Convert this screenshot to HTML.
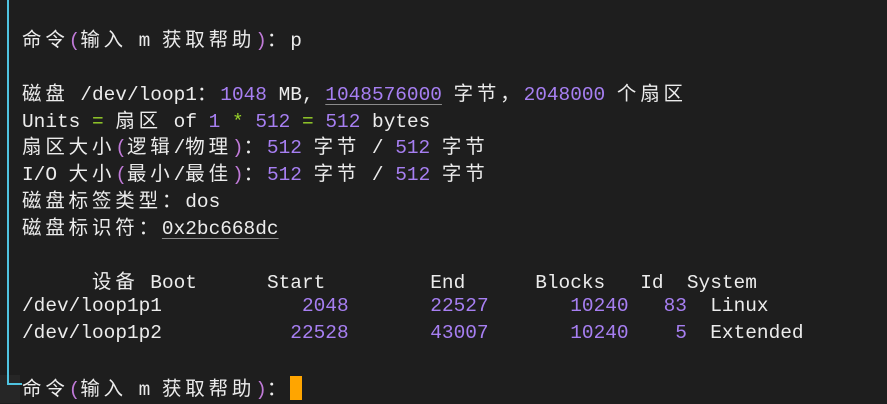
<!DOCTYPE html>
<html><head><meta charset="utf-8"><style>
html,body{margin:0;padding:0;background:#1e1e1e;width:887px;height:403px;overflow:hidden}
#t{position:absolute;left:22px;top:25px;font-family:"Liberation Mono","Noto Sans CJK SC",monospace;font-size:19.45px;line-height:26.85px;color:#ececec;white-space:pre}
.c{letter-spacing:3.88px;font-family:"Noto Sans CJK SC","WenQuanYi Zen Hei",sans-serif}
.n{color:#a77ff2}
.g{color:#9ad52a}
.p{color:#c07ad8}
.u{text-decoration:underline;text-decoration-color:#8a8a8a;text-underline-offset:4px}
.l{height:26.85px}
#br{position:absolute;left:7px;top:0;width:13px;height:383px;border-left:2px solid #4fc3e0;border-bottom:2px solid #4fc3e0}
#cur{position:absolute;left:290px;top:376px;width:12px;height:24px;background:#ffa500}
#bl{position:absolute;left:0;top:375px;width:20px;height:28px;background:#262626}
</style></head><body>
<div id="bl"></div>
<div id="br"></div>
<div id="t"><div class="l"><span class="c">命令</span><span class="p">(</span><span class="c">输入</span> m <span class="c">获取帮助</span><span class="p">)</span><span class="c">：</span>p</div><div class="l"> </div><div class="l"><span class="c">磁盘</span> /dev/loop1<span class="c">：</span><span class="n">1048</span> MB, <span class="n u">1048576000</span> <span class="c">字节，</span><span class="n">2048000</span> <span class="c">个扇区</span></div><div class="l">Units <span class="g">=</span> <span class="c">扇区</span> of <span class="n">1</span> <span class="g">*</span> <span class="n">512</span> <span class="g">=</span> <span class="n">512</span> bytes</div><div class="l"><span class="c">扇区大小</span><span class="p">(</span><span class="c">逻辑</span>/<span class="c">物理</span><span class="p">)</span><span class="c">：</span><span class="n">512</span> <span class="c">字节</span> / <span class="n">512</span> <span class="c">字节</span></div><div class="l">I/O <span class="c">大小</span><span class="p">(</span><span class="c">最小</span>/<span class="c">最佳</span><span class="p">)</span><span class="c">：</span><span class="n">512</span> <span class="c">字节</span> / <span class="n">512</span> <span class="c">字节</span></div><div class="l"><span class="c">磁盘标签类型：</span>dos</div><div class="l"><span class="c">磁盘标识符：</span><span class="u">0x2bc668dc</span></div><div class="l"> </div><div class="l">      <span class="c">设备</span> Boot      Start         End      Blocks   Id  System</div><div class="l">/dev/loop1p1            <span class="n">2048</span>       <span class="n">22527</span>       <span class="n">10240</span>   <span class="n">83</span>  Linux</div><div class="l">/dev/loop1p2           <span class="n">22528</span>       <span class="n">43007</span>       <span class="n">10240</span>    <span class="n">5</span>  Extended</div><div class="l"> </div><div class="l"><span class="c">命令</span><span class="p">(</span><span class="c">输入</span> m <span class="c">获取帮助</span><span class="p">)</span><span class="c">：</span></div></div>
<div id="cur"></div>
</body></html>
